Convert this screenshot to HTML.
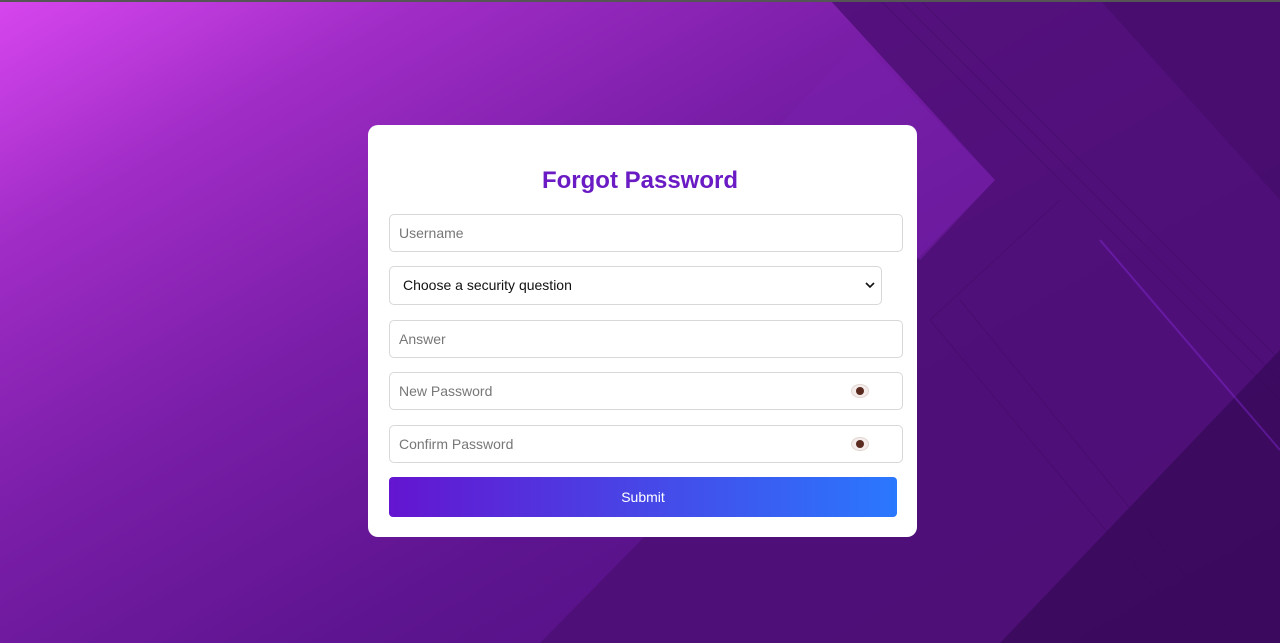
<!DOCTYPE html>
<html><head><meta charset="utf-8"><style>
html,body{margin:0;padding:0;width:1280px;height:643px;overflow:hidden;font-family:"Liberation Sans",Arial,sans-serif}
body{position:relative;background:linear-gradient(150deg,#d746ee 0%,#a02cc6 18%,#7a1ea8 38%,#5e1490 60%,#4a0f78 100%)}
.topbar{position:absolute;left:0;top:0;width:1280px;height:2px;background:#555}
svg.bg{position:absolute;left:0;top:0}
.card{position:absolute;left:368px;top:125px;width:549px;height:412px;background:#fff;border-radius:10px}
h1{position:absolute;left:0;right:0;top:167px;margin:0;text-align:center;font-size:24px;font-weight:bold;color:#6a1bc4}
.in{position:absolute;left:389px;width:512px;height:36px;border:1px solid #d8d8d8;border-radius:5px;background:#fff;box-sizing:content-box}
.in span{position:absolute;left:9px;top:10px;font-size:14px;color:#777}
.sel span{color:#111;left:13px}
.eye{position:absolute;right:34px;top:12px;width:16px;height:12px;border-radius:50%;background:#f3ecea;box-shadow:0 0 0 1px #e3d6d2}
.eye:after{content:"";position:absolute;left:4px;top:2px;width:8px;height:8px;border-radius:50%;background:#5a2a1e}
.btn{position:absolute;left:389px;top:477px;width:508px;height:40px;border-radius:4px;background:linear-gradient(90deg,#6415d0,#2a78fe);color:#fff;font-size:14px;text-align:center;line-height:40px}
</style></head><body>
<svg class="bg" width="1280" height="643">
<polygon points="830,0 1280,0 1280,643 540,643 995,180" fill="#4e0f76" opacity="0.85"/>
<polygon points="1100,0 1280,0 1280,200" fill="#3c0a5e" opacity="0.4"/>
<polygon points="1280,350 1280,643 1000,643" fill="#2a0648" opacity="0.5"/>
<polygon points="780,125 860,40 995,180 920,260" fill="#7a22ae" opacity="0.45"/>
<g stroke="#3a0a5a" stroke-width="1" opacity="0.35" fill="none">
<line x1="880" y1="0" x2="1280" y2="400"/><line x1="900" y1="0" x2="1280" y2="380"/><line x1="920" y1="0" x2="1280" y2="360"/>
<line x1="930" y1="320" x2="1200" y2="643"/><line x1="960" y1="300" x2="1240" y2="643"/>
<line x1="930" y1="320" x2="1060" y2="200"/>
</g>
<line x1="1100" y1="240" x2="1280" y2="450" stroke="#8a2be2" stroke-width="2" opacity="0.4"/>
</svg>
<div class="topbar"></div>
<div class="card"></div>
<h1>Forgot Password</h1>
<div class="in" style="top:214px"><span>Username</span></div>
<div class="in sel" style="top:266px;width:491px;height:37px"><span>Choose a security question</span>
<svg style="position:absolute;right:6px;top:14px" width="10" height="8"><path d="M1 2 L5 6 L9 2" stroke="#111" stroke-width="1.6" fill="none"/></svg></div>
<div class="in" style="top:320px"><span>Answer</span></div>
<div class="in" style="top:372px"><span>New Password</span><i class="eye"></i></div>
<div class="in" style="top:425px"><span>Confirm Password</span><i class="eye"></i></div>
<div class="btn">Submit</div>
</body></html>
